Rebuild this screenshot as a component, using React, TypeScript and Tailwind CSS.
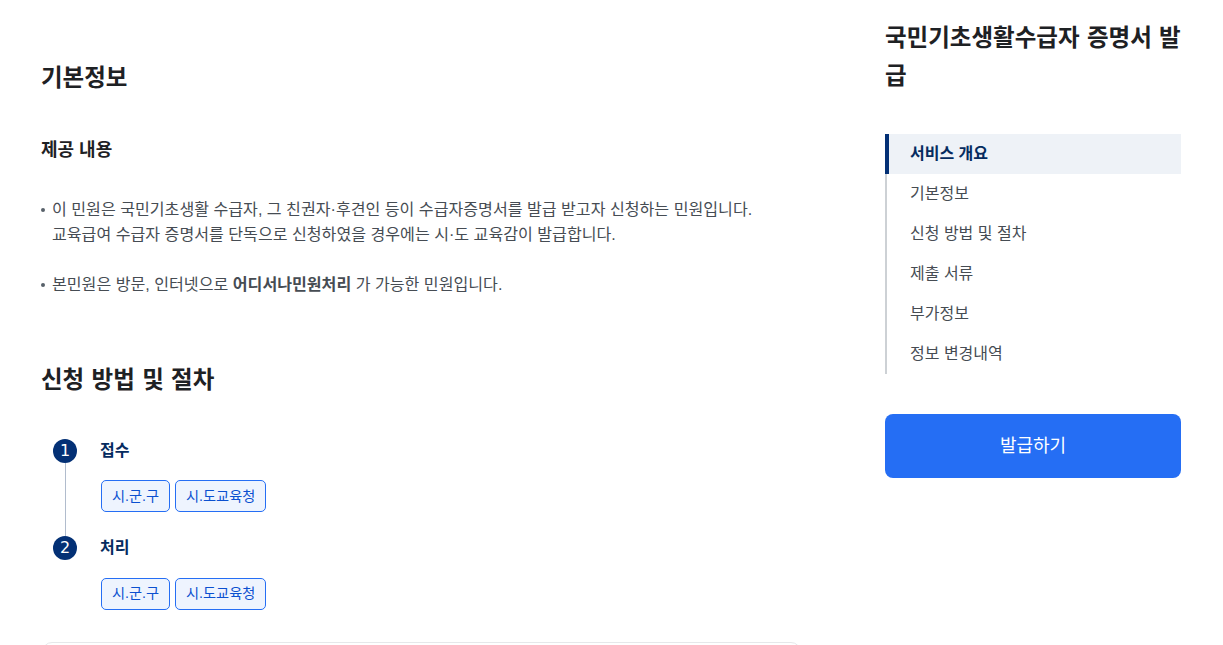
const navItems = ["서비스 개요", "기본정보", "신청 방법 및 절차", "제출 서류", "부가정보", "정보 변경내역"];

const steps = [
  { num: 1, title: "접수", tags: ["시.군.구", "시.도교육청"] },
  { num: 2, title: "처리", tags: ["시.군.구", "시.도교육청"] },
];

function Step({ num, title, tags, last }: { num: number; title: string; tags: string[]; last: boolean }) {
  return (
    <div className="relative flex h-[97.4px]">
      {!last && <div className="absolute left-[24px] top-[24px] bottom-0 w-px bg-[#b1bccd]" />}
      <div className="relative ml-[12px] flex h-6 w-6 items-center justify-center rounded-full bg-[#033075] font-['DejaVu_Sans',sans-serif] text-base text-white">
        {num}
      </div>
      <div className="ml-6">
        <div className="-ml-px h-6 text-base leading-6 font-bold text-[#052b5f]">{title}</div>
        <div className="mt-[17.3px] flex gap-[5px]">
          {tags.map((tag) => (
            <span key={tag} className="flex h-8 items-center rounded-[5px] border border-[#256ef4] bg-[#eef4fe] px-[10px] text-[14.2px] text-[#0b50d0]">
              {tag}
            </span>
          ))}
        </div>
      </div>
    </div>
  );
}

export default function App() {
  return (
    <div className="flex h-[645px] overflow-hidden bg-white font-['Liberation_Sans','Noto_Sans_CJK_KR',sans-serif] text-[#1e2124]">
      <main className="ml-[41px] w-[760px] shrink-0">
        <h2 className="mt-[60px] text-[23.5px] leading-[36px] font-bold [word-spacing:0.8px]">기본정보</h2>
        <h3 className="mt-[40px] text-lg leading-[28px] font-bold">제공 내용</h3>

        <ul className="mt-[33px] text-[16.1px] leading-[25px] text-[#464c53]">
          <li className="relative pl-[11px]">
            <span className="absolute left-0 top-[11px] h-1 w-1 rounded-full bg-[#58616a]" />
            이 민원은 국민기초생활 수급자, 그 친권자·후견인 등이 수급자증명서를 발급 받고자 신청하는 민원입니다.
            <br />
            교육급여 수급자 증명서를 단독으로 신청하였을 경우에는 시·도 교육감이 발급합니다.
          </li>
          <li className="relative mt-[25px] pl-[11px]">
            <span className="absolute left-0 top-[11px] h-1 w-1 rounded-full bg-[#58616a]" />
            본민원은 방문, 인터넷으로 <b>어디서나민원처리</b> 가 가능한 민원입니다.
          </li>
        </ul>

        <h2 className="mt-[65px] text-[23.5px] leading-[36px] font-bold [word-spacing:0.8px]">신청 방법 및 절차</h2>

        <div className="mt-[41px]">
          {steps.map((s, i) => (
            <Step key={s.num} num={s.num} title={s.title} tags={s.tags} last={i === steps.length - 1} />
          ))}
        </div>

        <div className="mt-[8px] ml-px h-10 w-[759px] rounded-t-[10px] border border-[#e6e8ea]" />
      </main>

      <aside className="ml-[84px] w-[296px] shrink-0">
        <h2 className="mt-[19px] text-[23.5px] leading-[38px] font-bold [word-spacing:0.8px]">국민기초생활수급자 증명서 발급</h2>

        <nav className="mt-[39px] border-l-2 border-[#cdd1d5]">
          {navItems.map((item, i) => (
            <div
              key={item}
              className={
                i === 0
                  ? "-ml-[2px] flex h-10 items-center border-l-4 border-[#033075] bg-[#eef2f7] pl-[21px] text-base font-bold text-[#052b5f]"
                  : "flex h-10 items-center pl-[23px] text-base text-[#464c53]"
              }
            >
              {item}
            </div>
          ))}
        </nav>

        <button className="mt-10 flex h-16 w-full items-center justify-center rounded-lg bg-[#256ef4] text-lg text-white">
          발급하기
        </button>
      </aside>
    </div>
  );
}
